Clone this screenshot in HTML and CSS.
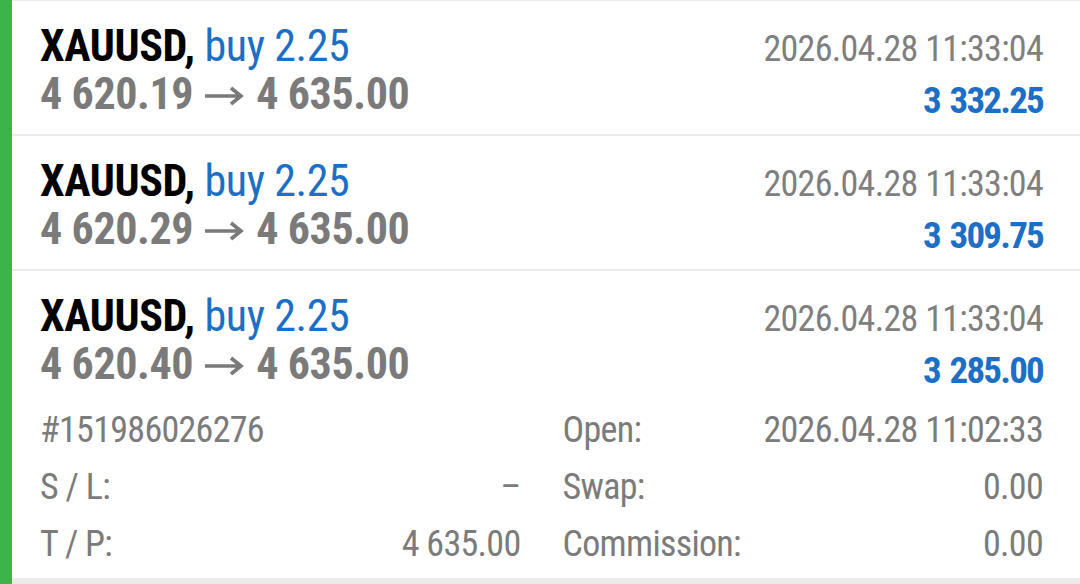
FILE: index.html
```html
<!DOCTYPE html>
<html>
<head>
<meta charset="utf-8">
<link rel="stylesheet" href="styles.css">
</head>
<body>
<div class="list">
  <div class="trade">
    <div class="main">
      <div class="left">
        <div class="title"><span class="sym">XAUUSD,</span> <span class="side">buy 2.25</span></div>
        <div class="prices"><span>4 620.19</span><svg class="arrow" viewBox="0 0 40 20" width="40" height="20"><path d="M1 10H37M27 2L37 10L27 18" fill="none" stroke="currentColor" stroke-width="3.6"/></svg><span>4 635.00</span></div>
      </div>
      <div class="right">
        <div class="time">2026.04.28 11:33:04</div>
        <div class="profit">3 332.25</div>
      </div>
    </div>
  </div>
  <div class="trade">
    <div class="main">
      <div class="left">
        <div class="title"><span class="sym">XAUUSD,</span> <span class="side">buy 2.25</span></div>
        <div class="prices"><span>4 620.29</span><svg class="arrow" viewBox="0 0 40 20" width="40" height="20"><path d="M1 10H37M27 2L37 10L27 18" fill="none" stroke="currentColor" stroke-width="3.6"/></svg><span>4 635.00</span></div>
      </div>
      <div class="right">
        <div class="time">2026.04.28 11:33:04</div>
        <div class="profit">3 309.75</div>
      </div>
    </div>
  </div>
  <div class="trade expanded">
    <div class="main">
      <div class="left">
        <div class="title"><span class="sym">XAUUSD,</span> <span class="side">buy 2.25</span></div>
        <div class="prices"><span>4 620.40</span><svg class="arrow" viewBox="0 0 40 20" width="40" height="20"><path d="M1 10H37M27 2L37 10L27 18" fill="none" stroke="currentColor" stroke-width="3.6"/></svg><span>4 635.00</span></div>
      </div>
      <div class="right">
        <div class="time">2026.04.28 11:33:04</div>
        <div class="profit">3 285.00</div>
      </div>
    </div>
    <div class="details">
      <div class="pair"><span class="label">#151986026276</span><span class="value"></span></div>
      <div class="pair"><span class="label">Open:</span><span class="value">2026.04.28 11:02:33</span></div>
      <div class="pair"><span class="label">S / L:</span><span class="value">–</span></div>
      <div class="pair"><span class="label">Swap:</span><span class="value">0.00</span></div>
      <div class="pair"><span class="label">T / P:</span><span class="value">4 635.00</span></div>
      <div class="pair"><span class="label">Commission:</span><span class="value">0.00</span></div>
    </div>
  </div>
</div>
</body>
</html>
```
FILE: styles.css
```css
html, body {
  margin: 0;
  padding: 0;
  background: #ffffff;
}
body {
  font-family: "Roboto Condensed", Roboto, "Liberation Sans", sans-serif;
  font-stretch: 75%;
}
.list {
  display: flex;
  flex-direction: column;
  gap: 2px;
  padding-top: 1px;
  min-height: 100vh;
  box-sizing: border-box;
  background: #ebebeb;
  border-left: 12px solid #3bb44a;
}
.trade {
  background: #ffffff;
  padding: 21px 37px 16px 28px;
}
.trade.expanded {
  padding-bottom: 5px;
}
.main {
  display: flex;
  justify-content: space-between;
  align-items: flex-start;
}
.left {
  font-size: 44px;
  line-height: 48px;
  font-weight: 700;
  letter-spacing: -0.4px;
}
.sym {
  color: #000000;
}
.side {
  color: #1c6fc5;
  font-weight: 400;
}
.prices {
  display: flex;
  align-items: center;
  color: #7a7a7a;
}
.arrow {
  display: block;
  margin: 3px 12px 0 11px;
  color: #7a7a7a;
}
.right {
  margin-top: 2px;
  margin-bottom: -8px;
  text-align: right;
  font-size: 36px;
  line-height: 51px;
  letter-spacing: -0.7px;
}
.time {
  color: #7f7f7f;
}
.profit {
  color: #1c6fc5;
  font-weight: 700;
  font-size: 37px;
  letter-spacing: -1.8px;
  word-spacing: 3px;
}
.details {
  margin-top: 14px;
  display: grid;
  grid-template-columns: 1fr 1fr;
  column-gap: 42px;
  font-size: 36px;
  line-height: 57px;
  letter-spacing: -0.7px;
  color: #7b7b7b;
}
.pair {
  display: flex;
  justify-content: space-between;
}
```
